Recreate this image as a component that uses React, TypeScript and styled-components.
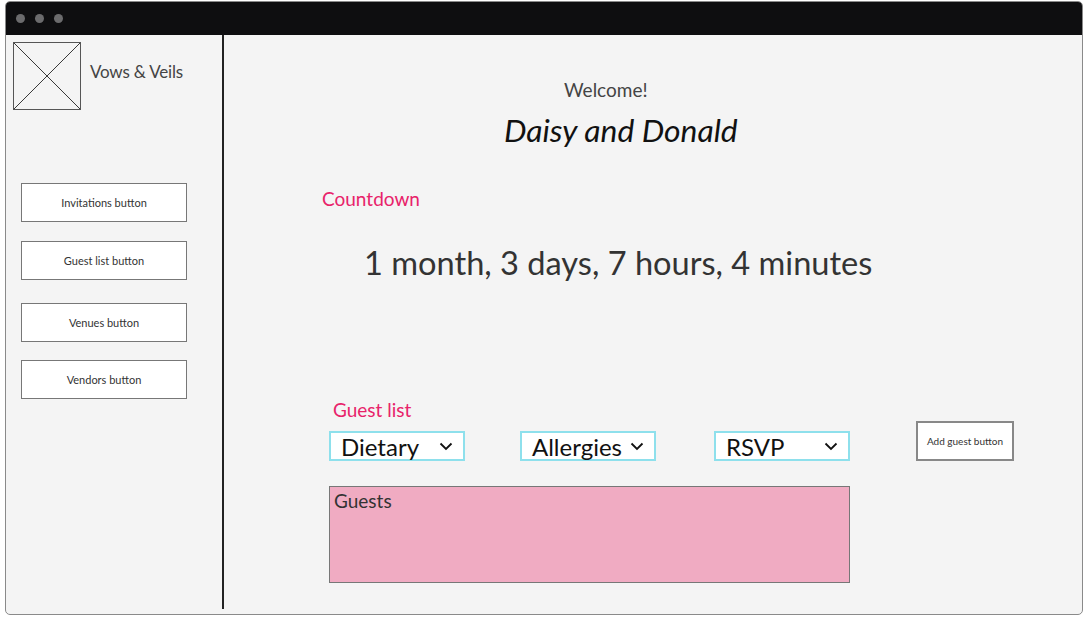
import React from 'react';
import styled, { createGlobalStyle } from 'styled-components';

const GlobalStyle = createGlobalStyle`
	html, body {
		margin: 0;
		padding: 0;
		background: #ffffff;
		font-family: 'Lato', 'Noto Sans', sans-serif;
	}
`;

const NAV_BUTTONS = [
	{ key: 'invitations', label: 'Invitations button', gap: 0 },
	{ key: 'guests', label: 'Guest list button', gap: 19 },
	{ key: 'venues', label: 'Venues button', gap: 23 },
	{ key: 'vendors', label: 'Vendors button', gap: 18 },
];

const FILTERS = [
	{ key: 'dietary', label: 'Dietary', gap: 0 },
	{ key: 'allergies', label: 'Allergies', gap: 55 },
	{ key: 'rsvp', label: 'RSVP', gap: 58 },
];

const Chevron = () => (
	<svg width="14" height="9" viewBox="0 0 14 9" fill="none">
		<path d="M1.5 1.5 L7 7 L12.5 1.5" stroke="#111" strokeWidth="1.8" />
	</svg>
);

const App = () => (
	<>
		<GlobalStyle />
		<Window>
			<TitleBar>
				<Dot />
				<Dot />
				<Dot />
			</TitleBar>
			<Body>
				<Sidebar>
					<Brand>
						<LogoBox>
							<svg width="100%" height="100%" viewBox="0 0 68 68" preserveAspectRatio="none">
								<line x1="0" y1="0" x2="68" y2="68" stroke="#333" strokeWidth="1" />
								<line x1="68" y1="0" x2="0" y2="68" stroke="#333" strokeWidth="1" />
							</svg>
						</LogoBox>
						<BrandName>Vows &amp; Veils</BrandName>
					</Brand>
					<Nav>
						{NAV_BUTTONS.map(({ key, label, gap }) => (
							<NavButton key={key} $gap={gap}>
								{label}
							</NavButton>
						))}
					</Nav>
				</Sidebar>
				<Main>
					<Welcome>Welcome!</Welcome>
					<Couple>Daisy and Donald</Couple>
					<SectionLabel $indent={98} $top={37}>
						Countdown
					</SectionLabel>
					<Countdown>1 month, 3 days, 7 hours, 4 minutes</Countdown>
					<SectionLabel $indent={109} $top={115}>
						Guest list
					</SectionLabel>
					<FilterRow>
						{FILTERS.map(({ key, label, gap }) => (
							<Select key={key} $gap={gap}>
								<span>{label}</span>
								<Chevron />
							</Select>
						))}
						<AddButton>Add guest button</AddButton>
					</FilterRow>
					<GuestsBox>Guests</GuestsBox>
				</Main>
			</Body>
		</Window>
	</>
);

const Window = styled.div`
	margin: 1px 0 0 5px;
	width: 1078px;
	height: 614px;
	box-sizing: border-box;
	border: 1px solid #8a8a8a;
	border-radius: 5px;
	background: #f4f4f4;
	overflow: hidden;
	display: flex;
	flex-direction: column;
`;

const TitleBar = styled.div`
	height: 33px;
	flex: none;
	background: #0e0e10;
	display: flex;
	align-items: center;
	gap: 10px;
	padding-left: 10px;
`;

const Dot = styled.span`
	width: 9px;
	height: 9px;
	border-radius: 50%;
	background: #6b6b6d;
`;

const Body = styled.div`
	flex: 1;
	display: flex;
`;

const Sidebar = styled.aside`
	width: 218px;
	flex: none;
	border-right: 2px solid #222;
	margin-bottom: 5px;
	padding: 7px 0 0 7px;
	box-sizing: border-box;
`;

const Brand = styled.div`
	display: flex;
	align-items: flex-start;
`;

const LogoBox = styled.div`
	width: 68px;
	height: 68px;
	border: 1px solid #555;
	box-sizing: border-box;

	svg {
		display: block;
	}
`;

const BrandName = styled.span`
	margin: 19px 0 0 9px;
	font-size: 17px;
	color: #444;
	letter-spacing: -0.2px;
`;

const Nav = styled.nav`
	margin: 73px 0 0 8px;
	display: flex;
	flex-direction: column;
`;

const NavButton = styled.button<{ $gap: number }>`
	width: 166px;
	height: 39px;
	margin-top: ${(p) => p.$gap}px;
	background: #ffffff;
	border: 1px solid #777;
	font-family: inherit;
	font-size: 11px;
	color: #333;
	padding: 0;
	cursor: pointer;
`;

const Main = styled.main`
	flex: 1;
	display: flex;
	flex-direction: column;
	align-items: flex-start;
	padding-top: 42px;
`;

const Welcome = styled.div`
	margin-left: 340px;
	font-size: 19px;
	line-height: 26px;
	color: #444;
`;

const Couple = styled.div`
	margin: 7px 0 0 280px;
	font-size: 31.8px;
	line-height: 40px;
	font-style: italic;
	color: #111;
`;

const SectionLabel = styled.div<{ $indent: number; $top: number }>`
	margin: ${(p) => p.$top}px 0 0 ${(p) => p.$indent}px;
	font-size: 19px;
	line-height: 24px;
	color: #e8226a;
`;

const Countdown = styled.div`
	margin: 32px 0 0 140px;
	font-size: 32.6px;
	line-height: 40px;
	color: #333;
`;

const FilterRow = styled.div`
	margin: -1px 0 0 105px;
	display: flex;
	align-items: flex-start;
`;

const Select = styled.div<{ $gap: number }>`
	width: 136px;
	height: 30px;
	box-sizing: border-box;
	margin: 10px 0 0 ${(p) => p.$gap}px;
	border: 2px solid #8ee0ec;
	background: #ffffff;
	display: flex;
	align-items: center;
	justify-content: space-between;
	padding: 0 10px 0 10px;
	font-size: 24px;
	color: #111;
`;

const AddButton = styled.button`
	margin-left: 66px;
	width: 98px;
	height: 40px;
	background: #ffffff;
	border: 2px solid #888;
	font-family: inherit;
	font-size: 10px;
	color: #333;
	padding: 0;
`;

const GuestsBox = styled.div`
	margin: 25px 0 0 105px;
	width: 521px;
	height: 97px;
	box-sizing: border-box;
	background: #f0abc2;
	border: 1px solid #777;
	padding: 2px 4px;
	font-size: 19px;
	color: #333;
`;

export default App;
